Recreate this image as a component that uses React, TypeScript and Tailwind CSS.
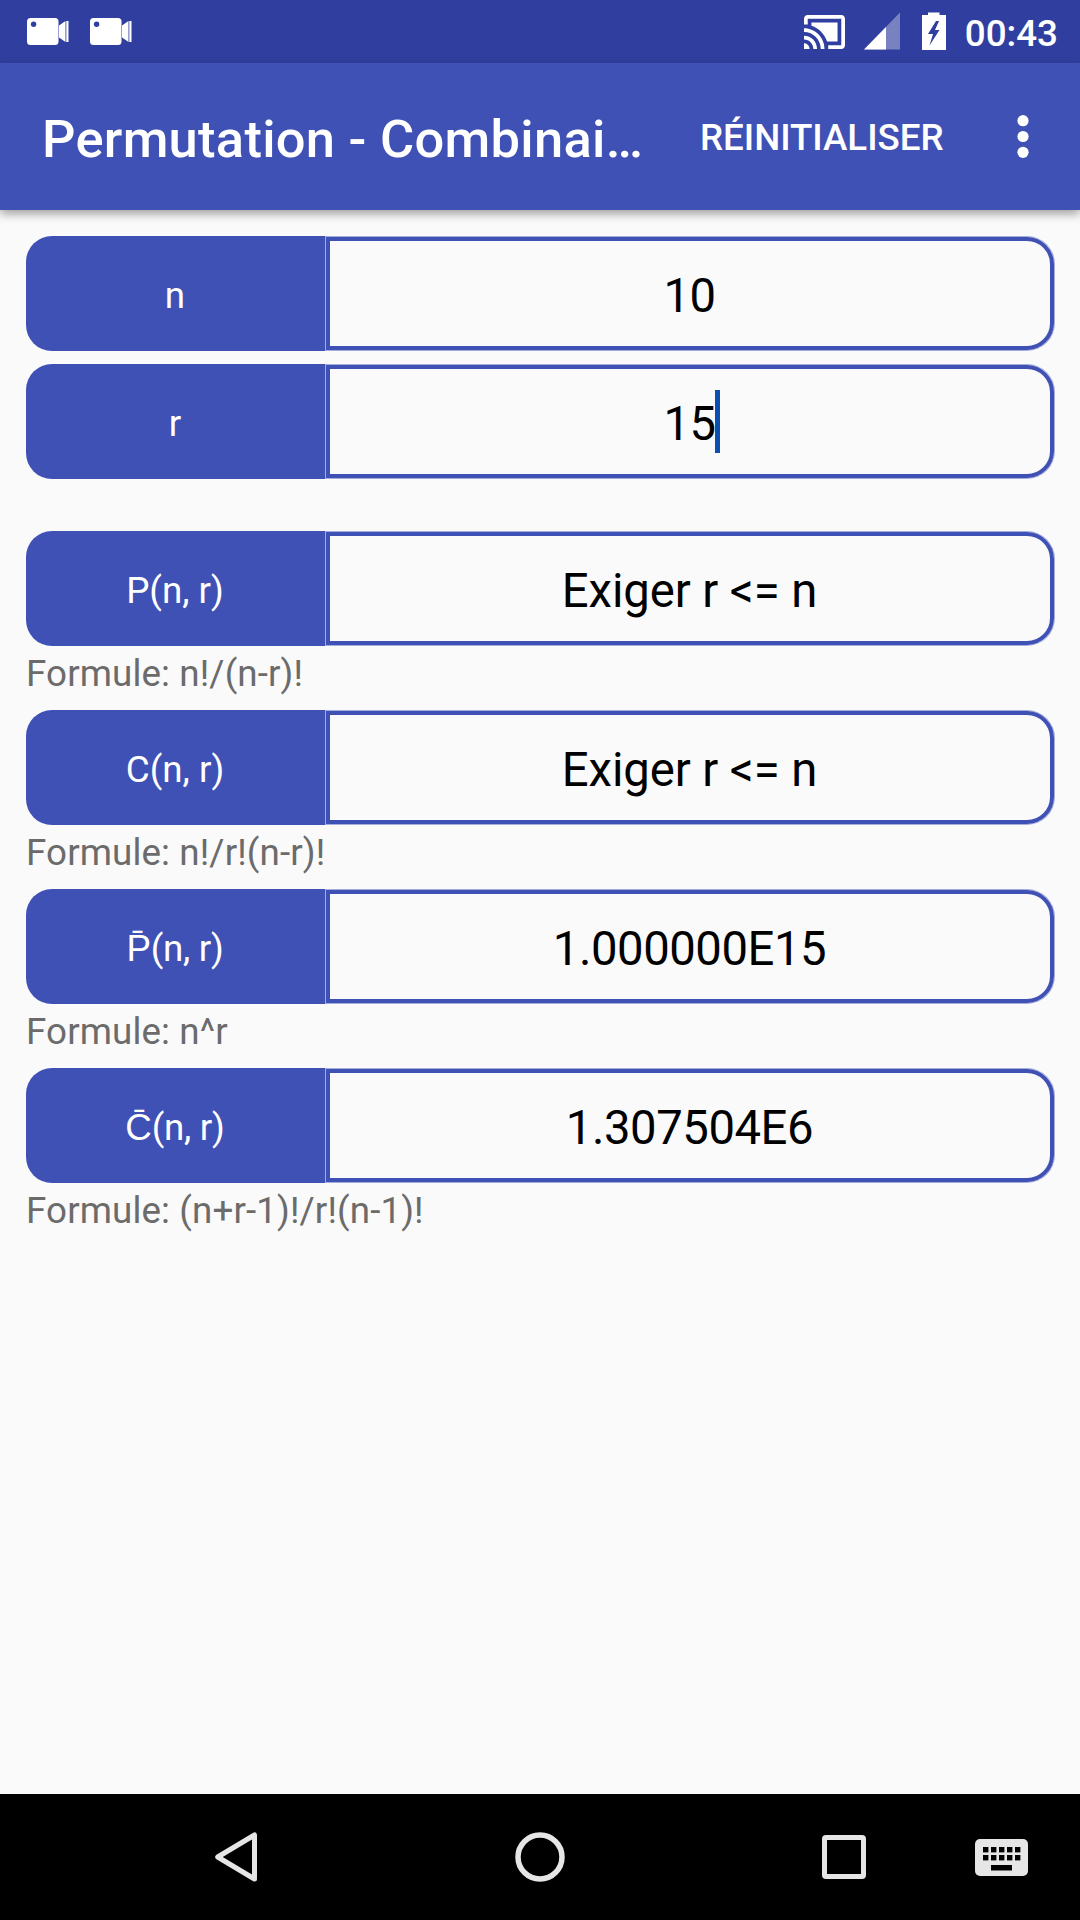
import React from 'react';
import clsx from 'clsx';

type FieldProps = {
  label: string;
  value: string;
  focused?: boolean;
};

type Result = {
  label: string;
  value: string;
  formula: string;
};

const results: Result[] = [
  { label: 'P(n, r)', value: 'Exiger r <= n', formula: 'n!/(n-r)!' },
  { label: 'C(n, r)', value: 'Exiger r <= n', formula: 'n!/r!(n-r)!' },
  { label: 'P̄(n, r)', value: '1.000000E15', formula: 'n^r' },
  { label: 'C̄(n, r)', value: '1.307504E6', formula: '(n+r-1)!/r!(n-1)!' },
];

function CameraIcon() {
  return (
    <svg className="h-[27px] w-[42px]" viewBox="0 0 42 27" fill="#fff">
      <rect width="31.5" height="27" rx="3.5" />
      <circle cx="6.6" cy="6.3" r="2.7" fill="#303f9f" />
      <path d="M32 7.5 38.5 3v21L32 19.5z" />
      <path d="M39.3 3h2.2v21h-2.2z" />
    </svg>
  );
}

function StatusBar() {
  return (
    <div className="flex h-[63px] items-start bg-[#303f9f] text-white">
      <div className="flex gap-[21px] pt-[18px] pl-[27px]">
        <CameraIcon />
        <CameraIcon />
      </div>
      <svg className="mt-[15px] ml-auto h-[34px] w-[41px]" viewBox="1 3 22 18" preserveAspectRatio="none" fill="#fff">
        <path d="M1 18v3h3c0-1.66-1.34-3-3-3zm0-4v2c2.76 0 5 2.24 5 5h2c0-3.87-3.13-7-7-7zm18-7H5v1.63c3.96 1.28 7.09 4.41 8.37 8.37H19V7zM1 10v2c4.97 0 9 4.03 9 9h2c0-6.08-4.93-11-11-11zm20-7H3c-1.1 0-2 .9-2 2v3h2V5h18v14h-7v2h7c1.1 0 2-.9 2-2V5c0-1.1-.9-2-2-2z" />
      </svg>
      <svg className="mt-[12px] ml-[19px] h-[38px] w-[36px]" viewBox="0 0 36 38" fill="#fff">
        <path d="M0 37.5 36 .5v37z" opacity=".35" />
        <path d="M0 37.5 22 15v22.5z" />
      </svg>
      <svg className="mt-[12px] ml-[22px] h-[38px] w-[24px]" viewBox="0 0 24 38" fill="#fff">
        <path fillRule="evenodd" d="M6 .5h11.5V3H24v35H0V3h6zM14 9 6 22h5L7.5 33.5 17.5 18H13l4-9z" />
      </svg>
      <span className="mt-[14px] mr-[22px] ml-[19px] text-[36.75px] leading-[40px] font-medium">00:43</span>
    </div>
  );
}

function AppBar() {
  return (
    <header className="relative z-10 flex h-[147px] items-center bg-[#3f51b5] text-white shadow-[0_4px_9px_rgba(0,0,0,0.36)]">
      <h1 className="w-[610px] pt-[5px] pl-[42px] text-[52.5px] font-medium tracking-[0.26px] whitespace-nowrap">
        Permutation - Combinai…
      </h1>
      <button className="ml-auto pt-[2px] text-[36.75px] font-medium tracking-[-0.05px]">RÉINITIALISER</button>
      <button className="mr-[51.5px] ml-[73px]" aria-label="Menu">
        <svg className="h-[43px] w-[12px]" viewBox="0 0 12 43" fill="#fff">
          <circle cx="6" cy="5.7" r="5.6" />
          <circle cx="6" cy="21.5" r="5.6" />
          <circle cx="6" cy="37.3" r="5.6" />
        </svg>
      </button>
    </header>
  );
}

function Field({ label, value, focused }: FieldProps) {
  const isNumber = /^\d/.test(value);
  // letters with a macron come from a slightly wider fallback font
  const hasMacron = label.includes('\u0304');

  return (
    <div className="flex h-[115px]">
      <div
        className={clsx(
          'flex w-[299px] items-center justify-center rounded-l-[26px] bg-[#3f51b5] pt-[4px] pr-[1px] text-[36.75px] text-white',
          hasMacron && 'tracking-[-0.25px]',
        )}
      >
        {label}
      </div>
      <div className="my-px ml-px flex flex-1 items-center justify-center rounded-r-[27px] border-4 border-[#3f51b5] pt-[5px] pr-[1px] text-[47.25px] text-black shadow-[0_0_0_1px_rgba(63,81,181,0.45)]">
        <span className={clsx('relative', isNumber ? 'tracking-[-0.45px]' : 'tracking-[-0.1px]')}>
          {value}
          {focused && <span className="absolute top-[1px] -right-[4px] h-[63px] w-[5px] bg-[#0b50b0]" />}
        </span>
      </div>
    </div>
  );
}

function NavBar() {
  return (
    <nav className="flex h-[126px] items-center bg-black pl-[214px]">
      <svg className="h-[52px] w-[44px]" viewBox="0 0 44 52" fill="none" stroke="#e6e6e6" strokeWidth="5" strokeLinejoin="round">
        <path d="M3.7 26 40.5 4v44z" />
      </svg>
      <svg className="ml-[256px] h-[52px] w-[52px]" viewBox="0 0 52 52" fill="none" stroke="#e6e6e6" strokeWidth="5.5">
        <circle cx="26" cy="26" r="22" />
      </svg>
      <svg className="ml-[256px] h-[44px] w-[44px]" viewBox="0 0 44 44" fill="none" stroke="#e6e6e6" strokeWidth="5">
        <rect x="2.5" y="2.5" width="39" height="39" rx="1.5" />
      </svg>
      <svg className="mt-[1px] ml-[109px] h-[37px] w-[53px]" viewBox="0 0 53 37">
        <rect width="53" height="37" rx="5" fill="#e6e6e6" />
        {[8, 16, 24, 32, 40].map((x) => (
          <React.Fragment key={x}>
            <rect x={x} y="8" width="5.4" height="5.4" />
            <rect x={x} y="16" width="5.4" height="5.4" />
          </React.Fragment>
        ))}
        <rect x="16" y="26" width="21" height="5.5" />
      </svg>
    </nav>
  );
}

export default function App() {
  return (
    <div className="flex h-[1920px] w-[1080px] flex-col overflow-hidden bg-[#fafafa] font-[Roboto,sans-serif]">
      <StatusBar />
      <AppBar />
      <main className="flex-1 px-[26px] pt-[26px]">
        <div className="mb-[52px] flex flex-col gap-[13px]">
          <Field label="n" value="10" />
          <Field label="r" value="15" focused />
        </div>
        {results.map(({ label, value, formula }) => (
          <section key={label}>
            <Field label={label} value={value} />
            <p className="h-[64px] pt-[4px] text-[36.75px] leading-[48px] tracking-[0.12px] text-[#6b6b6b]">
              Formule: {formula}
            </p>
          </section>
        ))}
      </main>
      <NavBar />
    </div>
  );
}
